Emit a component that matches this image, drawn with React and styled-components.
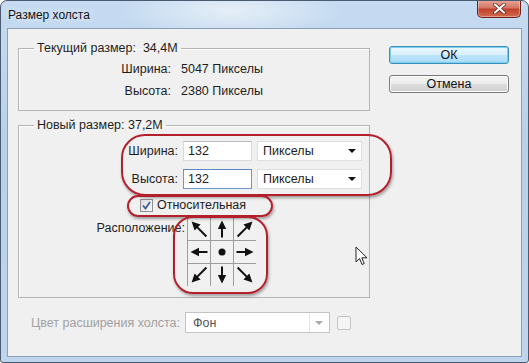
import React from 'react';
import styled, { createGlobalStyle } from 'styled-components';

const Global = createGlobalStyle`
  html, body { margin: 0; padding: 0; background: #fff; }
  body { font-family: "Liberation Sans", "Noto Sans", sans-serif; font-size: 12.5px; color: #1e1e1e; }
`;

const Window = styled.div`
  position: relative;
  width: 529px;
  height: 363px;
  box-sizing: border-box;
  border: 1px solid #4a5b70;
  border-radius: 7px 7px 3px 3px;
  background:
    radial-gradient(ellipse 160px 40px at 230px 10px, rgba(255,255,255,0.55), rgba(255,255,255,0) 70%),
    linear-gradient(to bottom, #c6dbf1 0%, #b8d0ea 40%, #bfd5ee 100%);
  display: flex;
  flex-direction: column;
  overflow: hidden;
`;

const TitleBar = styled.div`
  height: 27px;
  display: flex;
  align-items: flex-start;
  justify-content: space-between;
  padding-left: 7px;
`;

const Title = styled.div`
  margin-top: 7px;
  font-size: 12px;
  color: #111;
  text-shadow: 0 0 6px rgba(255,255,255,0.9);
`;

const CloseBtn = styled.div`
  width: 44px;
  height: 18px;
  margin-right: 7px;
  margin-top: -1px;
  box-sizing: border-box;
  border: 1px solid #6d2119;
  border-top: none;
  border-radius: 0 0 5px 5px;
  background: linear-gradient(to bottom, #e9a99b 0%, #d47664 45%, #c2412c 55%, #d16a4e 100%);
  box-shadow: inset 0 0 0 1px rgba(255,255,255,0.35);
  display: flex;
  align-items: center;
  justify-content: center;
`;

const Client = styled.div`
  flex: 1;
  margin: 0 6px 5px 6px;
  box-sizing: border-box;
  border: 1px solid #8a9fba;
  background: #f0f0f0;
  padding: 12px 0 0 10px;
  display: flex;
  flex-direction: column;
`;

const Top = styled.div`
  display: flex;
  gap: 19px;
`;

const LeftCol = styled.div`
  width: 352px;
  display: flex;
  flex-direction: column;
  gap: 7px;
`;

const Group = styled.fieldset`
  margin: 0;
  min-width: 0;
  border: 1px solid #b4b4b4;
  box-shadow: inset 1px 1px 0 #fff;
  padding: ${p => p.$pad};
`;

const Legend = styled.legend`
  margin-left: 15px;
  padding: 0 3px;
  line-height: 14px;
`;

const InfoRow = styled.div`
  display: grid;
  grid-template-columns: 152px auto;
  column-gap: 10px;
  height: 22px;
  align-items: center;
`;

const Label = styled.span`
  text-align: right;
  white-space: nowrap;
  color: ${p => (p.$disabled ? '#a0a0a0' : '#1e1e1e')};
`;

const SizeRow = styled.div`
  display: grid;
  grid-template-columns: 159px 69px 105px;
  column-gap: 5px;
  height: 20px;
  align-items: center;
  margin-bottom: 8px;
`;

const TextInput = styled.div`
  height: 20px;
  box-sizing: border-box;
  background: #fff;
  border: 1px solid ${p => (p.$focus ? '#6f95c9' : '#d6dbe2')};
  border-top-color: ${p => (p.$focus ? '#5c86c0' : '#b9bec6')};
  padding-left: 4px;
  display: flex;
  align-items: center;
`;

const Select = styled.div`
  width: ${p => (p.$w ? `${p.$w}px` : 'auto')};
  height: ${p => (p.$h || 20)}px;
  box-sizing: border-box;
  background: #fff;
  border: 1px solid ${p => (p.$disabled ? '#c3c3c3' : '#dedede')};
  padding-left: ${p => (p.$disabled ? 7 : 5)}px;
  display: flex;
  align-items: center;
  justify-content: space-between;
  color: ${p => (p.$disabled ? '#555' : '#1e1e1e')};
`;

const Caret = styled.span`
  width: 0;
  height: 0;
  margin-right: ${p => (p.$disabled ? 6 : 5)}px;
  border-left: 4px solid transparent;
  border-right: 4px solid transparent;
  border-top: 4px solid ${p => (p.$disabled ? '#a8a8a8' : '#111')};
`;

const CaretBox = styled.div`
  display: flex;
  align-items: center;
  height: 100%;
  border-left: 1px solid #e4e4e4;
  padding-left: 5px;
`;

const CheckRow = styled.div`
  display: flex;
  align-items: center;
  gap: 4px;
  height: 20px;
  padding-left: 121px;
  margin-top: -2px;
`;

const CheckBox = styled.span`
  width: 13px;
  height: 13px;
  box-sizing: border-box;
  border: 1px solid #8f8f8f;
  background: linear-gradient(135deg, #dcdcdc, #fafafa);
  display: flex;
  align-items: center;
  justify-content: center;
`;

const PlaceRow = styled.div`
  display: grid;
  grid-template-columns: 166px 69px;
  column-gap: 2px;
  margin-top: 2px;
  align-items: start;
`;

const PlaceLabel = styled.span`
  text-align: right;
  line-height: 22px;
`;

const Grid = styled.div`
  display: grid;
  grid-template-columns: repeat(3, 22px);
  grid-template-rows: repeat(3, 22px);
  gap: 1px;
  padding: 1px;
  background: #9d9d9d;
  width: 69px;
  height: 69px;
  box-sizing: border-box;
`;

const Cell = styled.div`
  background: #f1f1f1;
  display: flex;
  align-items: center;
  justify-content: center;
`;

const Buttons = styled.div`
  display: flex;
  flex-direction: column;
  gap: 11px;
  padding-top: 5px;
`;

const Button = styled.div`
  width: 120px;
  height: 18px;
  box-sizing: border-box;
  border: 1px solid ${p => (p.$default ? '#3c8fbf' : '#7a7a7a')};
  border-radius: 3px;
  background: ${p => (p.$default
    ? 'linear-gradient(to bottom, #eaf6fd 0%, #d9f0fc 50%, #bee6fd 51%, #a7d9f5 100%)'
    : 'linear-gradient(to bottom, #f4f4f4 0%, #ebebeb 50%, #dddddd 51%, #cfcfcf 100%)')};
  box-shadow: inset 0 0 0 1px ${p => (p.$default ? '#7ad0ec' : '#fcfcfc')};
  display: flex;
  align-items: center;
  justify-content: center;
  color: #111;
`;

const Bottom = styled.div`
  display: flex;
  align-items: center;
  margin-top: 14px;
  padding-left: 13px;
  gap: 5px;
`;

const Swatch = styled.span`
  width: 14px;
  height: 14px;
  margin-left: 2px;
  box-sizing: border-box;
  border: 1px solid #c4c4c4;
  border-radius: 2px;
  background: #f4f4f4;
`;

const Ring = styled.div`
  position: absolute;
  left: ${p => p.$l}px;
  top: ${p => p.$t}px;
  width: ${p => p.$w}px;
  height: ${p => p.$h}px;
  box-sizing: border-box;
  border: 2px solid #b3202b;
  border-radius: ${p => p.$r}px;
  box-shadow: 1px 2px 3px rgba(0,0,0,0.35);
  pointer-events: none;
`;

const Pointer = styled.svg`
  position: absolute;
  left: 354px;
  top: 245px;
`;

const Arrow = ({ angle, len }) => {
  const c = 11;
  const tip = c - len / 2;
  const tail = c + len / 2;
  return (
    <svg width="22" height="22" viewBox="0 0 22 22">
      <g transform={`rotate(${angle} ${c} ${c})`}>
        <line x1={c} y1={tail} x2={c} y2={tip + 5} stroke="#111" strokeWidth="2" />
        <polygon points={`${c},${tip} ${c - 4.2},${tip + 8.5} ${c + 4.2},${tip + 8.5}`} fill="#111" />
      </g>
    </svg>
  );
};

const cells = [-45, 0, 45, -90, null, 90, -135, 180, 135];

export default function App() {
  return (
    <>
      <Global />
      <Window>
        <TitleBar>
          <Title>Размер холста</Title>
          <CloseBtn>
            <svg width="13" height="11" viewBox="0 0 13 11">
              <path d="M2 1.5 L11 9.5 M11 1.5 L2 9.5" stroke="#5a1a12" strokeWidth="3.6" strokeLinecap="round" />
              <path d="M2 1.5 L11 9.5 M11 1.5 L2 9.5" stroke="#fff" strokeWidth="2.2" strokeLinecap="round" />
            </svg>
          </CloseBtn>
        </TitleBar>
        <Client>
          <Top>
            <LeftCol>
              <Group $pad="3px 0 8px 0">
                <Legend>Текущий размер:&nbsp; 34,4М</Legend>
                <InfoRow><Label>Ширина:</Label><span>5047 Пикселы</span></InfoRow>
                <InfoRow><Label>Высота:</Label><span>2380 Пикселы</span></InfoRow>
              </Group>
              <Group $pad="9px 0 11px 0">
                <Legend>Новый размер: 37,2М</Legend>
                <SizeRow>
                  <Label>Ширина:</Label>
                  <TextInput>132</TextInput>
                  <Select>Пикселы<Caret /></Select>
                </SizeRow>
                <SizeRow>
                  <Label>Высота:</Label>
                  <TextInput $focus>132</TextInput>
                  <Select>Пикселы<Caret /></Select>
                </SizeRow>
                <CheckRow>
                  <CheckBox>
                    <svg width="9" height="9" viewBox="0 0 9 9">
                      <path d="M1 4.5 L3.5 7.5 L8 1" fill="none" stroke="#3e5b94" strokeWidth="1.8" />
                    </svg>
                  </CheckBox>
                  <span>Относительная</span>
                </CheckRow>
                <PlaceRow>
                  <PlaceLabel>Расположение:</PlaceLabel>
                  <Grid>
                    {cells.map((a, i) => (
                      <Cell key={i}>
                        {a === null
                          ? <svg width="8" height="8"><circle cx="4" cy="4" r="3.5" fill="#111" /></svg>
                          : <Arrow angle={a} len={a % 90 === 0 ? 17 : 21} />}
                      </Cell>
                    ))}
                  </Grid>
                </PlaceRow>
              </Group>
            </LeftCol>
            <Buttons>
              <Button $default>ОК</Button>
              <Button>Отмена</Button>
            </Buttons>
          </Top>
          <Bottom>
            <Label $disabled>Цвет расширения холста:</Label>
            <Select $disabled $h={21} $w={145}>
              Фон
              <CaretBox><Caret $disabled /></CaretBox>
            </Select>
            <Swatch />
          </Bottom>
        </Client>
        <Ring $l={120} $t={133} $w={271} $h={62} $r={24} />
        <Ring $l={126} $t={194} $w={146} $h={22} $r={11} />
        <Ring $l={172} $t={215} $w={95} $h={78} $r={20} />
        <Pointer width="14" height="21" viewBox="0 0 14 21">
          <path d="M1 1 L1 16 L4.5 12.5 L7 18.5 L9.2 17.6 L6.8 11.8 L12 11.8 Z" fill="#fff" stroke="#222" strokeWidth="1" strokeLinejoin="round" />
        </Pointer>
      </Window>
    </>
  );
}
